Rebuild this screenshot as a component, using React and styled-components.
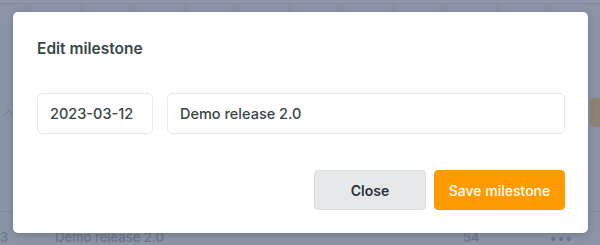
import React from "react";
import styled, { createGlobalStyle } from "styled-components";

const GlobalStyle = createGlobalStyle`
  html, body {
    margin: 0;
    padding: 0;
    width: 600px;
    height: 245px;
    overflow: hidden;
    background-color: #8a94a6;
    font-family: Inter, "Noto Sans", sans-serif;
  }
`;

const Page = styled.div`
  position: relative;
  width: 600px;
  height: 245px;
  overflow: hidden;
  display: flex;
  flex-direction: column;
  color: #6d778a;
  & > * {
    flex-shrink: 0;
  }
`;

const TopStrip = styled.div`
  height: 3px;
  border-bottom: 1px solid #808a9c;
  background-color: #8e98aa;
`;

const ColumnRow = styled.div`
  height: 60px;
  background-image: repeating-linear-gradient(
    to right,
    transparent 0,
    transparent 28px,
    #818b9d 28px,
    #818b9d 29px,
    transparent 29px,
    transparent 52px
  );
  background-position: 1px 0;
`;

const GroupRow = styled.div`
  height: 113px;
  padding-top: 34px;
  display: flex;
  align-items: flex-start;
  justify-content: space-between;
  border-bottom: 1px solid #808a9c;
`;

const Chevron = styled.svg`
  margin: 11px 0 0 3px;
`;

const Avatar = styled.div`
  width: 30px;
  height: 29px;
  margin-right: -20px;
  border-radius: 5px;
  background-color: #8e8276;
`;

const ItemRow = styled.div`
  height: 50px;
  display: flex;
  align-items: center;
  font-size: 13px;
  font-weight: 500;
`;

const Cell = styled.span`
  width: ${(p) => p.$w}px;
  flex-shrink: 0;
`;

const Dots = styled.span`
  letter-spacing: 1px;
  font-size: 14px;
  font-weight: 700;
`;

const Modal = styled.div`
  position: absolute;
  left: 13px;
  top: 12px;
  width: 575px;
  height: 221px;
  box-sizing: border-box;
  padding: 27px 23px 23px 24px;
  background-color: #ffffff;
  border-radius: 5px;
  box-shadow: 0 2px 6px rgba(40, 48, 64, 0.25);
  display: flex;
  flex-direction: column;
`;

const Title = styled.h2`
  margin: 0;
  font-size: 15.5px;
  line-height: 20px;
  font-weight: 600;
  color: #394848;
`;

const FieldRow = styled.div`
  margin-top: 34px;
  display: flex;
  gap: 14px;
`;

const Field = styled.div`
  box-sizing: border-box;
  height: 41px;
  width: ${(p) => (p.$grow ? "auto" : `${p.$w}px`)};
  flex: ${(p) => (p.$grow ? 1 : "none")};
  padding: 0 12px;
  display: flex;
  align-items: center;
  border: 1px solid #e8e9ea;
  border-radius: 5px;
  font-size: 14.5px;
  font-weight: 500;
  color: #384646;
`;

const Actions = styled.div`
  margin-top: auto;
  display: flex;
  justify-content: flex-end;
  gap: 8px;
`;

const Button = styled.button`
  box-sizing: border-box;
  height: 40px;
  width: ${(p) => p.$w}px;
  border-radius: 4px;
  font-family: inherit;
  font-size: 14px;
  cursor: pointer;
  border: 1px solid ${(p) => (p.$primary ? "#ff9b00" : "#d9dddd")};
  background-color: ${(p) => (p.$primary ? "#ff9b00" : "#e6e8e9")};
  color: ${(p) => (p.$primary ? "#ffffff" : "#2a3240")};
  font-weight: ${(p) => (p.$primary ? 500 : 600)};
`;

const App = () => {
  return (
    <>
      <GlobalStyle />
      <Page>
        <TopStrip />
        <ColumnRow />
        <GroupRow>
          <Chevron width="12" height="8" viewBox="0 0 12 8">
            <path d="M1 6.5 L6 1.5 L11 6.5" fill="none" stroke="#7b8598" strokeWidth="1.4" />
          </Chevron>
          <Avatar />
        </GroupRow>
        <ItemRow>
          <Cell $w={55}>3</Cell>
          <Cell $w={408}>Demo release 2.0</Cell>
          <Cell $w={87}>54</Cell>
          <Dots>•••</Dots>
        </ItemRow>
        <Modal>
          <Title>Edit milestone</Title>
          <FieldRow>
            <Field $w={116}>2023-03-12</Field>
            <Field $grow>Demo release 2.0</Field>
          </FieldRow>
          <Actions>
            <Button $w={112}>Close</Button>
            <Button $primary $w={131}>
              Save milestone
            </Button>
          </Actions>
        </Modal>
      </Page>
    </>
  );
};

export default App;
